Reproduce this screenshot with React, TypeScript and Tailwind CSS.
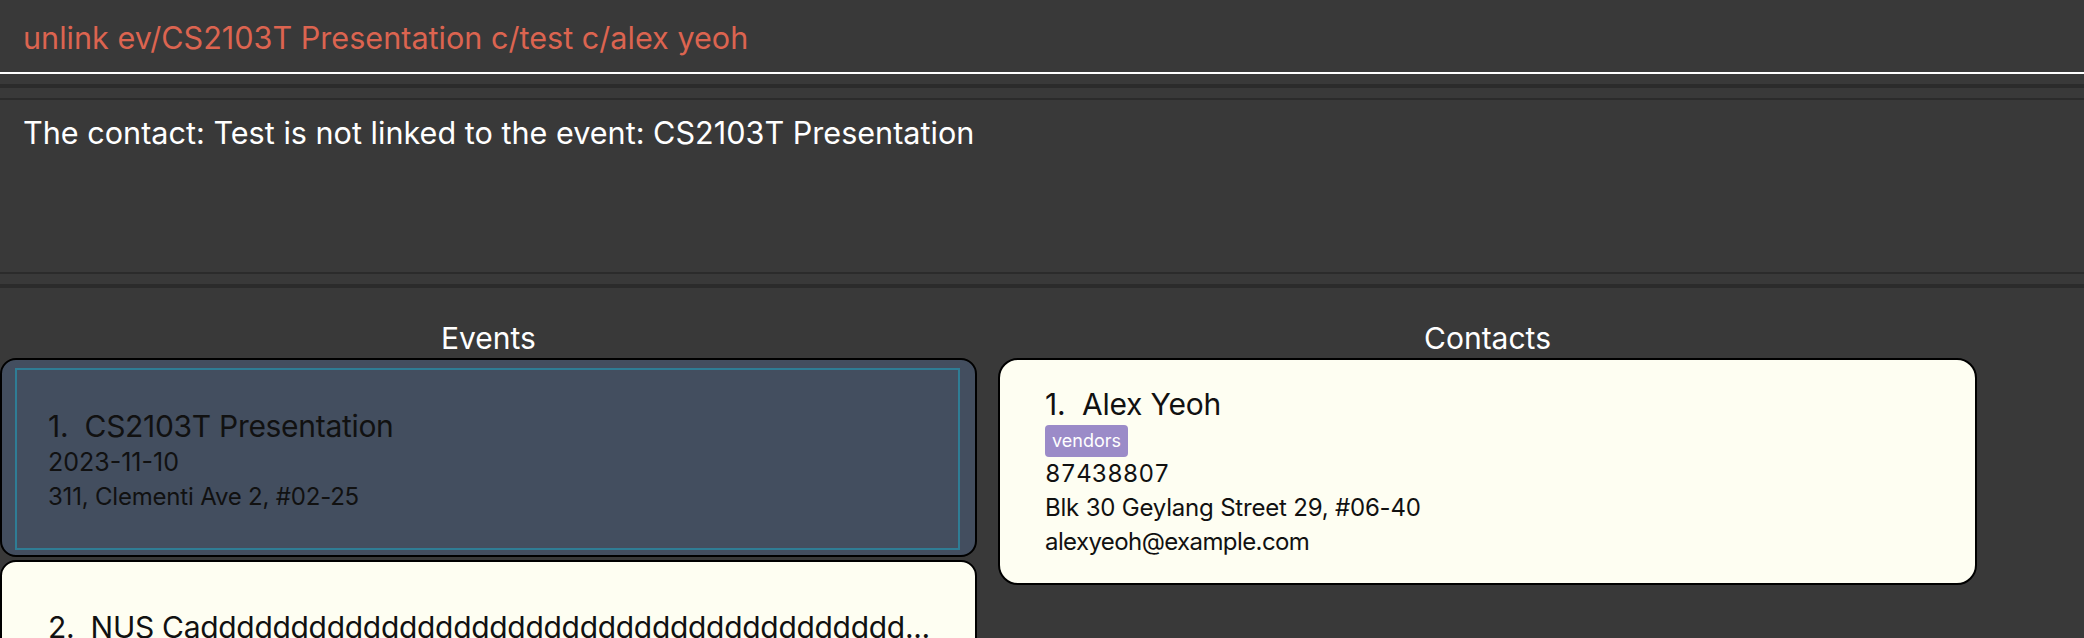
const FONT = "font-['Inter','Noto_Sans',sans-serif]"

function EventCard() {
  return (
    <div className="h-[199px] rounded-[16px] border-2 border-black bg-[#434e5f] pl-[13px] pr-[15px] pt-[8px] pb-[5px]">
      <div className="h-full border-2 border-[#2f7d95] pl-[31px] pt-[37px] text-[#111]">
        <div className="text-[30px] leading-[38px] tracking-[-0.3px]">1.&nbsp; CS2103T Presentation</div>
        <div className="text-[25px] leading-[35px]">2023-11-10</div>
        <div className="text-[24px] leading-[34px] tracking-[-0.2px]">311, Clementi Ave 2, #02-25</div>
      </div>
    </div>
  )
}

function ContactCard() {
  return (
    <div className="h-[227px] rounded-[20px] border-2 border-black bg-[#fefef2] pl-[45px] pt-[24px] text-[#111]">
      <div className="text-[30px] leading-[40px] tracking-[-0.2px]">1.&nbsp; Alex Yeoh</div>
      <div className="mt-[1px] flex">
        <span className="rounded-[4px] bg-[#9b8bc8] px-[7px] text-[18px] leading-[32px] text-white">vendors</span>
      </div>
      <div className="text-[24px] leading-[34px] tabular-nums">87438807</div>
      <div className="text-[24px] leading-[34px] tracking-[-0.2px]">Blk 30 Geylang Street 29, #06-40</div>
      <div className="text-[24px] leading-[34px] tracking-[-0.6px]">alexyeoh@example.com</div>
    </div>
  )
}

export default function App() {
  return (
    <div className={`h-[638px] w-[2084px] overflow-hidden bg-[#393939] ${FONT}`}>
      <div className="flex h-[74px] items-center border-b-2 border-white pl-[23px] pt-[3px] text-[30.6px] text-[#dc6450]">
        unlink ev/CS2103T Presentation c/test c/alex yeoh
      </div>
      <div className="h-[10px]" />
      <div className="h-[4px] bg-[#2b2b2b]" />
      <div className="h-[10px]" />
      <div className="h-[2px] bg-[#2b2b2b]" />
      <div className="h-[172px] pl-[23px] pt-[14px] text-[30.6px] leading-[38px] text-white">
        The contact: Test is not linked to the event: CS2103T Presentation
      </div>
      <div className="h-[2px] bg-[#2b2b2b]" />
      <div className="h-[10px]" />
      <div className="h-[4px] bg-[#2b2b2b]" />

      <div className="flex gap-[21px]">
        <div className="flex w-[977px] flex-col">
          <div className="pt-[32px] pb-[2px] text-center text-[30px] leading-[36px] text-white">Events</div>
          <div className="flex flex-col gap-[3px]">
            <EventCard />
            <div className="h-[200px] rounded-[16px] border-2 border-black bg-[#fefef2] pl-[46px] pt-[46px] text-[#111]">
              <div className="text-[30px] leading-[38px] whitespace-nowrap tracking-[-0.3px]">
                2.&nbsp; NUS Caddddddddddddddddddddddddddddddddddddddd...
              </div>
            </div>
          </div>
        </div>
        <div className="flex w-[979px] flex-col">
          <div className="pt-[32px] pb-[2px] text-center text-[30px] leading-[36px] text-white">Contacts</div>
          <ContactCard />
        </div>
      </div>
    </div>
  )
}
